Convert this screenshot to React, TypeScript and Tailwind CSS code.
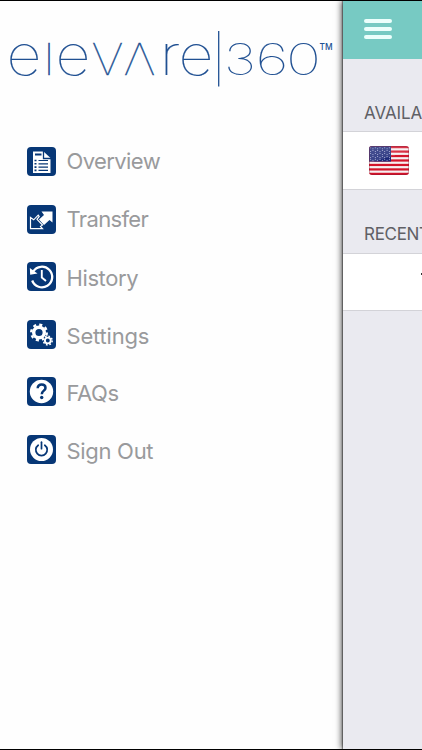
import type { ReactNode } from "react";

type MenuItem = {
  label: string;
  icon: ReactNode;
  row: string;
  text: string;
};

const NAVY = "#073776";

const menu: MenuItem[] = [
  {
    label: "Overview",
    row: "mt-[28px]",
    text: "tracking-[-0.6px]",
    icon: (
      <>
        <path d="M6 4.500h10.500l7 6.500v15H6z" fill="#fff" />
        <path d="M16.500 4v7.500H24" fill="none" stroke={NAVY} strokeWidth="1.300" />
        <path d="M8 7.500h6.500" stroke={NAVY} strokeWidth="2" />
        <path d="M11.500 13.500h9.500M11.500 16.800h9.500M11.500 20.100h9.500M11.500 23.400h9.500" stroke={NAVY} strokeWidth="1.200" />
        <path d="M7.500 13.500h2M7.500 16.800h2M7.500 20.100h2M7.500 23.400h2" stroke={NAVY} strokeWidth="1.600" />
      </>
    ),
  },
  {
    label: "Transfer",
    row: "mt-[29px]",
    text: "tracking-[-0.65px]",
    icon: (
      <>
        <path d="M14.500 6.500H25.500v11l-3-2.500-5.500 5-5-5.500 5-4.500z" fill="#fff" />
        <path d="M3.500 12.500l3.200 2.300 4.500-4.600 1 1.300-2.200 2.800 5.500 5.700-2 1.500 2 2.200H3.500z" fill="none" stroke="#fff" strokeWidth="1.200" />
      </>
    ),
  },
  {
    label: "History",
    row: "mt-[28px]",
    text: "pt-[3px] tracking-[-0.4px]",
    icon: (
      <>
        <path d="M6.200 9.500A10.300 10.300 0 1 1 5.200 18.500" fill="none" stroke="#fff" strokeWidth="2.300" />
        <path d="M2.800 6l.4 6.800 7.300-1.200z" fill="#fff" />
        <path d="M14.800 8v7.500l4.200 3.500" fill="none" stroke="#fff" strokeWidth="1.900" />
      </>
    ),
  },
  {
    label: "Settings",
    row: "mt-[29px]",
    text: "pt-[3px] tracking-[-0.2px]",
    icon: (
      <>
        <circle cx="12" cy="12.500" r="5.300" fill="none" stroke="#fff" strokeWidth="3.400" />
        <circle cx="12" cy="12.500" r="7.800" fill="none" stroke="#fff" strokeWidth="2.400" strokeDasharray="3.063 3.063" />
        <circle cx="20.800" cy="20.500" r="4.500" fill={NAVY} />
        <circle cx="20.800" cy="20.500" r="2.900" fill="none" stroke="#fff" strokeWidth="1.900" />
        <circle cx="20.800" cy="20.500" r="4.400" fill="none" stroke="#fff" strokeWidth="1.500" strokeDasharray="1.728 1.728" />
      </>
    ),
  },
  {
    label: "FAQs",
    row: "mt-[28px]",
    text: "pt-[3px] tracking-[-0.4px]",
    icon: (
      <>
        <circle cx="14.500" cy="14.500" r="11.700" fill="#fff" />
        <path d="M10.700 11.200c0-2.300 1.700-3.600 3.900-3.600 2.300 0 3.900 1.300 3.900 3.300 0 2.800-3.700 2.800-3.700 6.300" fill="none" stroke={NAVY} strokeWidth="2.500" />
        <circle cx="14.700" cy="20.500" r="1.700" fill={NAVY} />
      </>
    ),
  },
  {
    label: "Sign Out",
    row: "mt-[29px]",
    text: "pt-[3px] tracking-[-0.3px]",
    icon: (
      <>
        <circle cx="14.500" cy="14.500" r="11.500" fill="#fff" />
        <path d="M11.200 10.200a5.700 5.700 0 1 0 6.600 0" fill="none" stroke={NAVY} strokeWidth="1.700" strokeLinecap="round" />
        <path d="M14.500 7.200v6.500" stroke={NAVY} strokeWidth="1.700" strokeLinecap="round" />
      </>
    ),
  },
];

const letters = [
  { ch: "e", x: 6.5, size: 56, w: 35, bold: 0.15 },
  { ch: "I", x: 43.5, size: 44, w: 11, bold: 0.5 },
  { ch: "e", x: 55.5, size: 56, w: 35, bold: 0.15 },
  { ch: "V", x: 91.5, size: 44, w: 32, bold: 0.3 },
  { ch: "Λ", x: 123.5, size: 44, w: 32, bold: 0.3 },
  { ch: "r", x: 159.5, size: 56, w: 21, bold: 0.15 },
  { ch: "e", x: 178.5, size: 56, w: 35, bold: 0.15 },
  { ch: "3", x: 224, size: 43, w: 32, bold: 0.05 },
  { ch: "6", x: 255.5, size: 43, w: 33, bold: 0.05 },
  { ch: "0", x: 286, size: 43, w: 35, bold: 0.05 },
];

function Logo() {
  return (
    <svg width="340" height="70" viewBox="0 20 340 70" className="block" fontFamily="Inter, sans-serif" fill="#205092">
      {letters.map((l, i) => (
        <text
          key={i}
          x={l.x}
          y="74.500"
          fontSize={l.size}
          fontWeight="100"
          textLength={l.w}
          lengthAdjust="spacingAndGlyphs"
          stroke="#205092"
          strokeWidth={l.bold}
        >
          {l.ch}
        </text>
      ))}
      <path d="M218.700 31v55.500" stroke="#205092" strokeWidth="1.300" />
      <text x="319.500" y="50" fontSize="9" fontWeight="500" textLength="13" lengthAdjust="spacingAndGlyphs">
        TM
      </text>
    </svg>
  );
}

function Flag() {
  const stripes = [0, 2, 4, 6, 8, 10, 12];
  const stars = Array.from({ length: 45 }, (_, i) => i);
  return (
    <svg width="40" height="29" viewBox="0 0 40 29" className="block rounded-[3px]">
      <defs>
        <linearGradient id="shine" x1="0" y1="0" x2="0.400" y2="1">
          <stop offset="0" stopColor="#fff" stopOpacity="0.200" />
          <stop offset="0.500" stopColor="#fff" stopOpacity="0.120" />
          <stop offset="0.510" stopColor="#fff" stopOpacity="0" />
        </linearGradient>
      </defs>
      <rect width="40" height="29" fill="#f6f0f1" />
      {stripes.map((s) => (
        <rect key={s} y={s * 2.23} width="40" height="2.230" fill="#d3142a" />
      ))}
      <rect width="22" height="15.600" fill="#1c2878" />
      {stars.map((s) => (
        <circle key={s} cx={1.6 + (s % 9) * 2.35} cy={2 + Math.floor(s / 9) * 2.9 + (s % 2 ? 0.7 : -0.3)} r="0.500" fill="#b9bde0" />
      ))}
      <rect width="40" height="29" fill="url(#shine)" />
      <rect x="0.500" y="0.500" width="39" height="28" rx="2.500" fill="none" stroke="#7b1830" strokeOpacity="0.350" />
    </svg>
  );
}

export default function App() {
  return (
    <div className="flex h-[750px] w-[422px] overflow-hidden border-y border-black bg-white font-['Inter',sans-serif]">
      <aside className="w-[343px] shrink-0 bg-[#fefefe]">
        <div className="pt-[19px]">
          <Logo />
        </div>
        <nav className="pt-[29px]">
          {menu.map((m) => (
            <a key={m.label} className={`ml-[27px] flex h-[29px] items-center gap-[10.500px] ${m.row}`}>
              <svg width="29" height="29" viewBox="0 0 29 29" className="shrink-0 rounded-[4px] bg-[#073776]">
                {m.icon}
              </svg>
              <span className={`text-[22px] leading-[29px] text-[#999a9c] ${m.text}`}>{m.label}</span>
            </a>
          ))}
        </nav>
      </aside>

      <main className="w-[79px] shrink-0 bg-[#eaeaf0] shadow-[-1px_0_1px_0_rgba(0,0,0,0.35),-2px_0_6px_0_rgba(0,0,0,0.6)]">
        <header className="flex h-[58px] flex-col gap-1 bg-[#77cac3] pt-[18px] pl-[21px]">
          <div className="h-1 w-7 rounded-full bg-[#ecfffc]" />
          <div className="h-1 w-7 rounded-full bg-[#ecfffc]" />
          <div className="h-1 w-7 rounded-full bg-[#ecfffc]" />
        </header>
        <h2 className="h-[72px] pt-[42px] pl-[21px] text-[17px] leading-6 tracking-[-0.1px] whitespace-nowrap text-[#606065]">
          AVAILA
        </h2>
        <div className="h-[59px] border-y border-[#d3d3d8] bg-white pt-[14px] pl-[26px]">
          <Flag />
        </div>
        <h2 className="h-[63px] pt-[32px] pl-[21px] text-[17px] leading-6 tracking-[-0.3px] whitespace-nowrap text-[#606065]">
          RECENT
        </h2>
        <div className="flex h-[58px] justify-end border-y border-[#d3d3d8] bg-white pt-[19px]">
          <span className="h-[2px] w-px bg-[#333]" />
        </div>
      </main>
    </div>
  );
}
